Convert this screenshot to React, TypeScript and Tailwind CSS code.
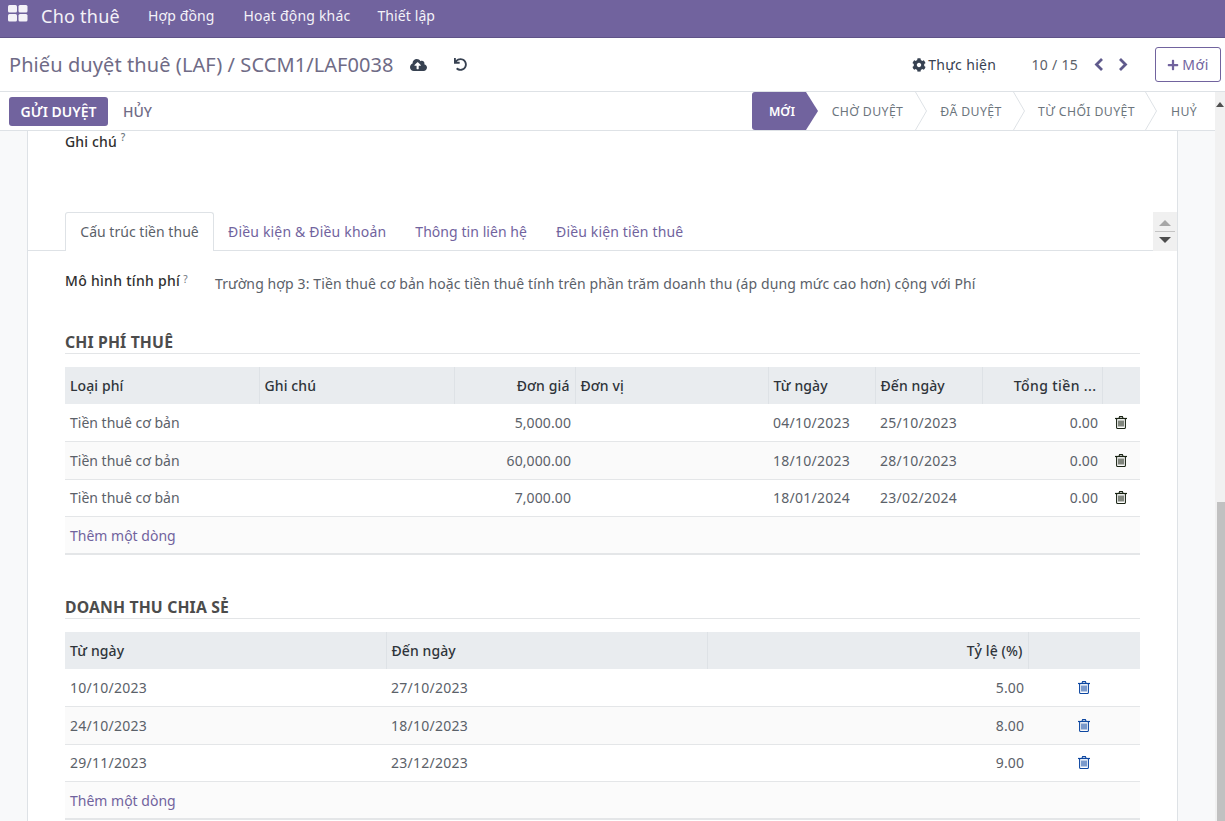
import { FaCloudUploadAlt, FaUndo, FaCog, FaPlus } from "react-icons/fa";

const font = "font-['Noto_Sans','Open_Sans',sans-serif]";

function Apps() {
  return (
    <svg width="20" height="17" viewBox="0 0 20 17" className="fill-[#f4f2f8]">
      <rect x="0" y="0" width="9" height="7.5" rx="1.5" />
      <rect x="10.5" y="0" width="9" height="7.5" rx="1.5" />
      <rect x="0" y="9" width="9" height="7.5" rx="1.5" />
      <rect x="10.5" y="9" width="9" height="7.5" rx="1.5" />
    </svg>
  );
}

function Chevron() {
  return (
    <svg width="12" height="38" viewBox="0 0 12 38" className="shrink-0 fill-none stroke-[#dee2e6]">
      <path d="M0.5 0 L11.5 19 L0.5 38" />
    </svg>
  );
}

function Pager({ left }: { left?: boolean }) {
  return (
    <svg width="10" height="13" viewBox="0 0 10 13" className="fill-none stroke-[#5f5a8c] stroke-[2.8]">
      <path d={left ? "M8 1 L2.5 6.5 L8 12" : "M2 1 L7.5 6.5 L2 12"} />
    </svg>
  );
}

function Step({ label, w, pad, last }: { label: string; w: string; pad: string; last?: boolean }) {
  return (
    <div className={`flex h-full items-center ${w}`}>
      <span className={`flex-1 pt-[2px] text-center text-[12.25px] tracking-[0.4px] text-[#6c757d] ${pad}`}>{label}</span>
      {!last && <Chevron />}
    </div>
  );
}

function Th({ children, right }: { children?: React.ReactNode; right?: boolean }) {
  return (
    <th className={`h-[37px] border-r border-[#dee2e6] px-[5px] text-[14px] font-medium tracking-[0.1px] text-[#2f343a] last:border-r-0 ${right ? "text-right" : "text-left"}`}>
      {children}
    </th>
  );
}

function Td({ children, right, date }: { children?: React.ReactNode; right?: boolean; date?: boolean }) {
  return (
    <td className={`text-[14px] text-[#5b6169] ${right ? "pr-[4px] pl-[5px] text-right tracking-[0.1px]" : "px-[5px] text-left"} ${date ? "tracking-[0.25px]" : ""}`}>
      {children}
    </td>
  );
}

function TrashIcon({ cls }: { cls: string }) {
  return (
    <svg width="12" height="13" viewBox="0 0 12 13" className={`fill-none ${cls}`}>
      <path d="M0 2.5 H12" strokeWidth="1.2" />
      <path d="M4 2.2 L4.6 0.6 H7.4 L8 2.2" strokeWidth="1.1" />
      <path d="M1.6 2.5 V11.4 Q1.6 12.5 2.7 12.5 H9.3 Q10.4 12.5 10.4 11.4 V2.5" strokeWidth="1.1" />
      <path d="M4 4.5 V10.5 M6 4.5 V10.5 M8 4.5 V10.5" strokeWidth="1.1" />
    </svg>
  );
}

const rowCls = "h-[37.5px] border-b border-[#e4e6e8] even:bg-[#fafafa]";

function AddLine({ span }: { span: number }) {
  return (
    <tr className="h-[37.5px] border-b-2 border-[#e4e6e8] bg-[#fbfbfb]">
      <td colSpan={span} className="px-[5px] text-[14px] text-[#71639e]">Thêm một dòng</td>
    </tr>
  );
}

function SectionTitle({ children }: { children: React.ReactNode }) {
  return (
    <h3 className="border-b border-[#e3e5e7] pt-[1px] text-[15.75px] leading-[22px] font-bold tracking-[0.15px] text-[#4c4c4c]">{children}</h3>
  );
}

const fees = [
  ["5,000.00", "04/10/2023", "25/10/2023"],
  ["60,000.00", "18/10/2023", "28/10/2023"],
  ["7,000.00", "18/01/2024", "23/02/2024"],
];
const shares = [
  ["10/10/2023", "27/10/2023", "5.00"],
  ["24/10/2023", "18/10/2023", "8.00"],
  ["29/11/2023", "23/12/2023", "9.00"],
];

export default function App() {
  return (
    <div className={`flex h-[821px] flex-col overflow-hidden bg-white ${font}`}>
      <nav className="flex h-[38px] shrink-0 items-start border-b border-[#5f5388] bg-[#71639e] text-[#f4f2f8]">
        <div className="mt-[5px] ml-[8px]"><Apps /></div>
        <span className="mt-[3px] ml-[13px] text-[18px] leading-[26px] tracking-[0.25px]">Cho thuê</span>
        <span className="mt-[5px] ml-[28px] text-[14px] leading-[22px] tracking-[0.12px]">Hợp đồng</span>
        <span className="mt-[5px] ml-[29px] text-[14px] leading-[22px] tracking-[0.2px]">Hoạt động khác</span>
        <span className="mt-[5px] ml-[27px] text-[14px] leading-[22px] tracking-[0.1px]">Thiết lập</span>
      </nav>

      <div className="flex h-[54px] shrink-0 items-center border-b border-[#dee2e6] pr-[4px] pl-[9px]">
        <span className="text-[20px] tracking-[0.08px] text-[#6f6b86]">Phiếu duyệt thuê (LAF) / SCCM1/LAF0038</span>
        <FaCloudUploadAlt className="ml-[16px] h-[16px] w-[17px] text-[#374151]" />
        <FaUndo className="ml-[27px] h-[13px] w-[13px] text-[#374151]" />
        <div className="ml-auto flex items-center">
          <FaCog className="h-[14px] w-[14px] text-[#374151]" />
          <span className="ml-[2px] text-[14px] tracking-[0.35px] text-[#374151]">Thực hiện</span>
          <span className="ml-[35px] text-[14px] tracking-[0.3px] text-[#5b6169]">10 / 15</span>
          <span className="ml-[16px] flex"><Pager left /></span>
          <span className="ml-[14px] flex"><Pager /></span>
          <button className="ml-[27px] flex h-[35px] w-[66px] items-center justify-center rounded-[3px] border border-[#71639e] text-[14px] tracking-[0.6px] text-[#71639e]">
            <FaPlus className="mr-[3px] h-[12px] w-[12px]" />Mới
          </button>
        </div>
      </div>

      <div className="flex min-h-0 flex-1">
        <div className="flex min-w-0 flex-1 flex-col">
          <div className="flex h-[39px] shrink-0 items-center border-b border-[#dee2e6] pl-[9px]">
            <button className="h-[29px] w-[99px] rounded-[3px] bg-[#71639e] text-[14px] font-semibold text-white">GỬI DUYỆT</button>
            <button className="ml-[15px] text-[14px] font-medium text-[#6f6b86]">HỦY</button>
            <div className="ml-auto flex h-[38px] items-center">
              <div className="flex h-full w-[54px] items-center justify-center rounded-l-[3px] bg-[#71639e] pt-[2px] pl-[6px] text-[12.25px] font-semibold text-white">MỚI</div>
              <div className="h-0 w-0 border-y-[19px] border-l-[12px] border-y-transparent border-l-[#71639e]" />
              <Step label="CHỜ DUYỆT" w="w-[109px]" pad="pl-[2px]" />
              <Step label="ĐÃ DUYỆT" w="w-[98px]" pad="pl-[2px]" />
              <Step label="TỪ CHỐI DUYỆT" w="w-[132px]" pad="pl-[3px]" />
              <Step label="HUỶ" w="w-[58px]" pad="pr-[4px]" last />
            </div>
          </div>

          <div className="min-h-0 flex-1 bg-[#f8f9fa] pr-[37px] pl-[27px]">
            <div className="h-full overflow-hidden border-x border-x-[#dee2e6] bg-white">
              <div className="flex h-[81px] items-start pl-[37px] text-[14px] font-medium text-[#2f2f2f]">
                <span className="leading-[21px] tracking-[0.15px]">Ghi chú</span>
                <span className="ml-[4px] text-[10px] leading-[12px] text-[#6c757d]">?</span>
              </div>

              <div className="flex h-[39px] items-end justify-between border-b border-[#dee2e6] pl-[37px]">
                <div className="flex items-end">
                  <div className="-mb-px flex h-[39px] w-[149px] items-center justify-center rounded-t-[3px] border border-b-0 border-[#dee2e6] bg-white pb-[2px] text-[14px] tracking-[0.03px] text-[#5b6169]">Cấu trúc tiền thuê</div>
                  <div className="flex h-[39px] items-center pt-[2px] pl-[14px] text-[14px] tracking-[0.18px] text-[#71639e]">Điều kiện &amp; Điều khoản</div>
                  <div className="flex h-[39px] items-center pt-[2px] pl-[29px] text-[14px] tracking-[0.06px] text-[#71639e]">Thông tin liên hệ</div>
                  <div className="flex h-[39px] items-center pt-[2px] pl-[29px] text-[14px] tracking-[0.15px] text-[#71639e]">Điều kiện tiền thuê</div>
                </div>
                <div className="-mb-px flex h-[39px] w-[24px] flex-col items-center justify-center bg-[#f0f0f0]">
                  <div className="h-0 w-0 border-x-[6px] border-b-[6px] border-x-transparent border-b-[#a6a6a6]" />
                  <div className="my-[5px] h-px w-[20px] bg-[#c4c4c4]" />
                  <div className="h-0 w-0 border-x-[6px] border-t-[6px] border-x-transparent border-t-[#4c4c4c]" />
                </div>
              </div>

              <div className="pr-[37px] pl-[37px]">
                <div className="flex h-[79px] items-start pt-[19px]">
                  <span className="w-[150px] shrink-0 text-[14px] leading-[21px] font-medium tracking-[0.3px] text-[#2f2f2f]">
                    Mô hình tính phí<sup className="relative -top-[3px] ml-[3px] text-[10px] font-normal text-[#6c757d]">?</sup>
                  </span>
                  <span className="pt-[3px] text-[14px] leading-[22px] tracking-[0.11px] whitespace-nowrap text-[#5b6169]">Trường hợp 3: Tiền thuê cơ bản hoặc tiền thuê tính trên phần trăm doanh thu (áp dụng mức cao hơn) cộng với Phí</span>
                </div>

                <SectionTitle>CHI PHÍ THUÊ</SectionTitle>
                <table className="mt-[13px] w-full table-fixed border-collapse">
                  <colgroup>
                    <col className="w-[194px]" /><col className="w-[195px]" /><col className="w-[121px]" /><col className="w-[193px]" />
                    <col className="w-[107px]" /><col className="w-[107px]" /><col className="w-[120px]" /><col className="w-[38px]" />
                  </colgroup>
                  <thead className="bg-[#e9ecef]">
                    <tr>
                      <Th>Loại phí</Th><Th>Ghi chú</Th><Th right>Đơn giá</Th><Th>Đơn vị</Th>
                      <Th>Từ ngày</Th><Th>Đến ngày</Th><Th right><span className="tracking-[0.4px]">Tổng tiền ...</span></Th><Th />
                    </tr>
                  </thead>
                  <tbody>
                    {fees.map((f, i) => (
                      <tr key={i} className={rowCls}>
                        <Td>Tiền thuê cơ bản</Td><Td /><Td right>{f[0]}</Td><Td />
                        <Td date>{f[1]}</Td><Td date>{f[2]}</Td><Td right>0.00</Td>
                        <td><div className="flex justify-center"><TrashIcon cls="stroke-[#1a2414]" /></div></td>
                      </tr>
                    ))}
                    <AddLine span={8} />
                  </tbody>
                </table>

                <div className="mt-[40px]"><SectionTitle>DOANH THU CHIA SẺ</SectionTitle></div>
                <table className="mt-[13px] w-full table-fixed border-collapse">
                  <colgroup>
                    <col className="w-[321px]" /><col className="w-[321px]" /><col className="w-[321px]" /><col className="w-[112px]" />
                  </colgroup>
                  <thead className="bg-[#e9ecef]">
                    <tr><Th>Từ ngày</Th><Th>Đến ngày</Th><Th right>Tỷ lệ (%)</Th><Th /></tr>
                  </thead>
                  <tbody>
                    {shares.map((s, i) => (
                      <tr key={i} className={rowCls}>
                        <Td date>{s[0]}</Td><Td date>{s[1]}</Td><Td right>{s[2]}</Td>
                        <td className="pl-[50px]"><TrashIcon cls="stroke-[#0d47a1]" /></td>
                      </tr>
                    ))}
                    <AddLine span={4} />
                  </tbody>
                </table>
              </div>
            </div>
          </div>
        </div>

        <div className="flex w-[10px] shrink-0 flex-col bg-[#f1f1f1]">
          <div className="mx-auto mt-[10px] h-0 w-0 border-x-[4px] border-b-[5px] border-x-transparent border-b-[#505050]" />
          <div className="mt-[395px] ml-[2px] flex-1 bg-[#c1c1c1]" />
        </div>
      </div>
    </div>
  );
}
